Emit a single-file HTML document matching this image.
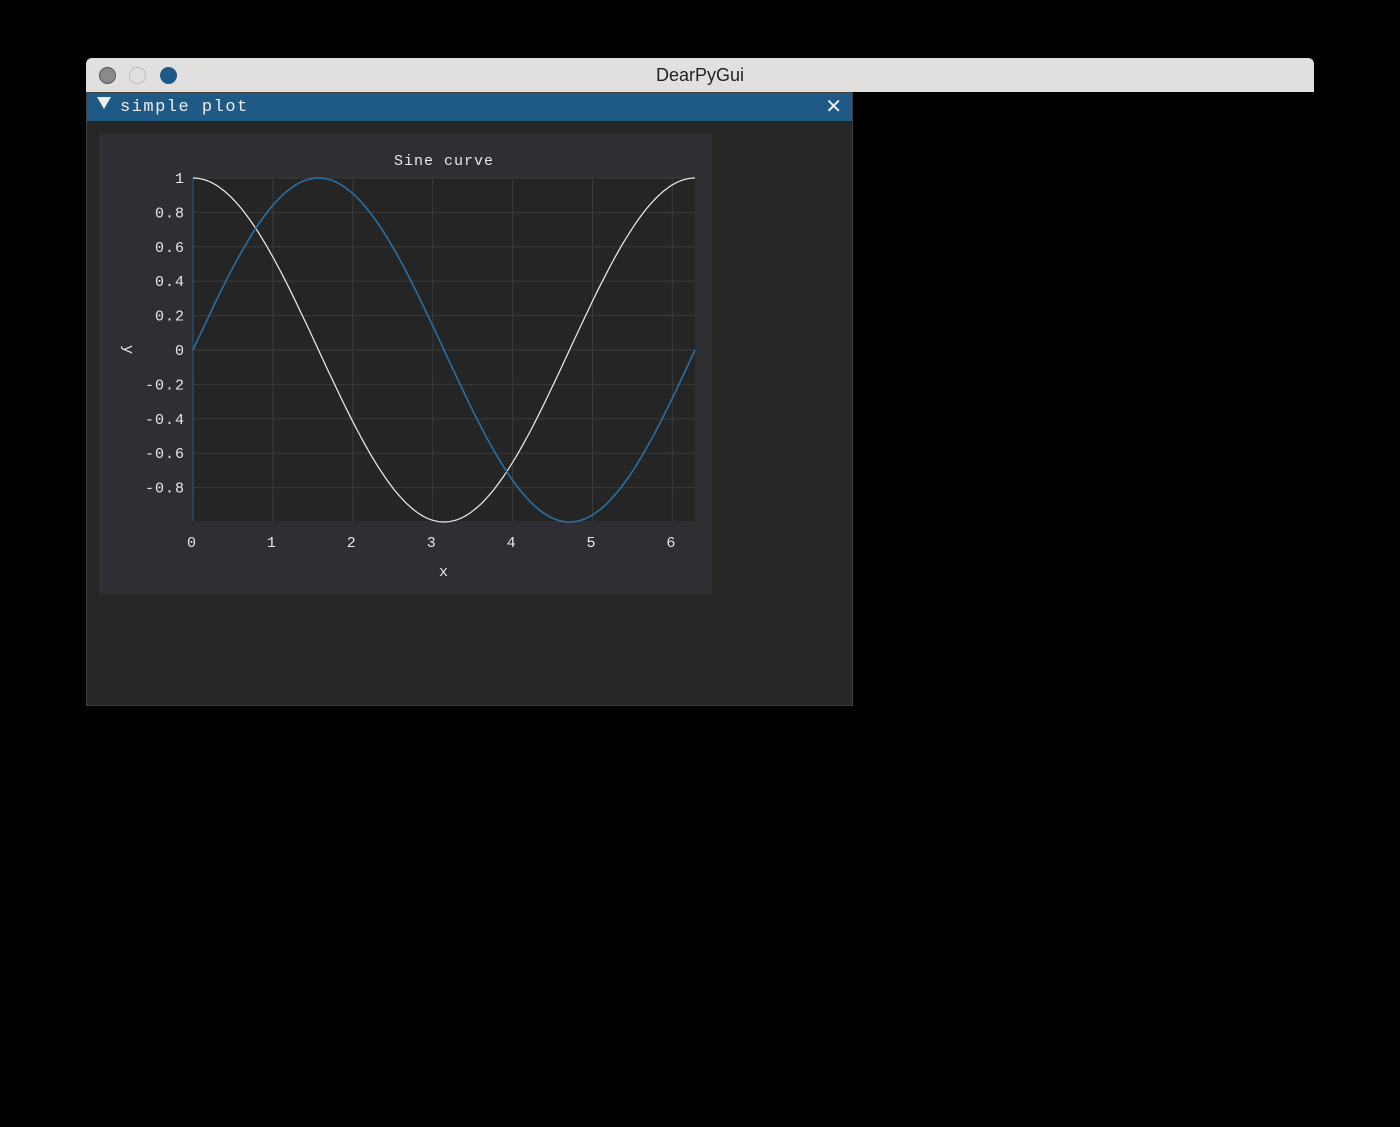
<!DOCTYPE html>
<html><head><meta charset="utf-8"><style>
html,body{margin:0;padding:0;background:#000;width:1400px;height:1127px;overflow:hidden;font-family:"Liberation Mono",monospace;}
.win{position:absolute;left:86px;top:58px;width:1228px;height:955px;background:#000;border-radius:6px 6px 0 0;overflow:hidden;}
.tb{position:absolute;left:0;top:0;width:1228px;height:34px;background:#e2e0de;}
.tb .t{position:absolute;left:0;width:100%;top:7px;text-align:center;font:18px "Liberation Sans",sans-serif;color:#222;}
.dot{position:absolute;top:9px;width:17px;height:17px;border-radius:50%;}
.iw{position:absolute;left:0;top:34px;width:765px;height:612px;background:#262626;border:1px solid #404040;}
.ih{position:absolute;left:0;top:0;width:765px;height:28px;background:#1f5a86;color:#eee;font-size:17px;}
svg text{font-family:"Liberation Mono",monospace;fill:#e8e8e8;font-size:15px;letter-spacing:1px;}
</style></head><body>
<div class="win">
 <div class="tb">
  <div class="dot" style="left:13px;background:#8a8a8a;border:1px solid #555;width:15px;height:15px"></div>
  <div class="dot" style="left:43px;border:1px dotted #999;width:15px;height:15px"></div>
  <div class="dot" style="left:74px;background:#1f5a86"></div>
  <div class="t">DearPyGui</div>
 </div>
 <div class="iw">
  <div class="ih"><span style="position:absolute;left:10px;top:4px;width:0;height:0;border-left:7px solid transparent;border-right:7px solid transparent;border-top:12px solid #eee"></span><span style="position:absolute;left:33px;top:5px;letter-spacing:1.5px">simple plot</span><span style="position:absolute;right:10px;top:1px;font-size:20px;font-family:'Liberation Sans',sans-serif">✕</span></div>
 </div>
</div>
<svg id="p" width="1400" height="1127" style="position:absolute;left:0;top:0">
 <rect x="99" y="134" width="613" height="460" fill="#2f2f33"/>
 <rect x="193" y="178" width="502" height="343" fill="#252525"/>
 <g id="grid" stroke="#3a3a3a" stroke-width="1"></g>
 <line x1="193" y1="178" x2="193" y2="521" stroke="#1f5a86"/>
 <text x="444" y="165" text-anchor="middle" font-size="16">Sine curve</text>
 <text x="444" y="576" text-anchor="middle" font-size="13">x</text>
 <text x="0" y="0" transform="translate(124,350) rotate(90)" text-anchor="middle" font-size="13">y</text>
 <g id="lab"></g>
 <path id="c" fill="none" stroke="#f0f0f0" stroke-width="1.2"/>
 <path id="s" fill="none" stroke="#2b6fa3" stroke-width="1.6"/>
</svg>
<script>
var X=function(v){return 193+v*79.9},Y=function(v){return 350-v*172};
var g=document.getElementById('grid'),l=document.getElementById('lab'),h='';
for(var i=0;i<=6;i++){h+='<line x1="'+X(i)+'" y1="178" x2="'+X(i)+'" y2="521"/>';}
var yl=[1,0.8,0.6,0.4,0.2,0,-0.2,-0.4,-0.6,-0.8];
yl.forEach(function(v){h+='<line x1="193" y1="'+Y(v)+'" x2="695" y2="'+Y(v)+'"/>';});
g.innerHTML=h;var t='';
yl.forEach(function(v){var s=(v==0?'0':(v==1?'1':v.toFixed(1)));t+='<text x="185" y="'+(Y(v)+5)+'" text-anchor="end" font-size="16">'+s+'</text>';});
for(var i=0;i<=6;i++)t+='<text x="'+(X(i)-1)+'" y="547" text-anchor="middle" font-size="16">'+i+'</text>';
l.innerHTML=t;
var a='',b='';for(var k=0;k<=200;k++){var x=k/200*2*Math.PI;a+=(k?'L':'M')+X(x).toFixed(1)+' '+Y(Math.cos(x)).toFixed(1);b+=(k?'L':'M')+X(x).toFixed(1)+' '+Y(Math.sin(x)).toFixed(1);}
document.getElementById('c').setAttribute('d',a);document.getElementById('s').setAttribute('d',b);
</script>
</body></html>
